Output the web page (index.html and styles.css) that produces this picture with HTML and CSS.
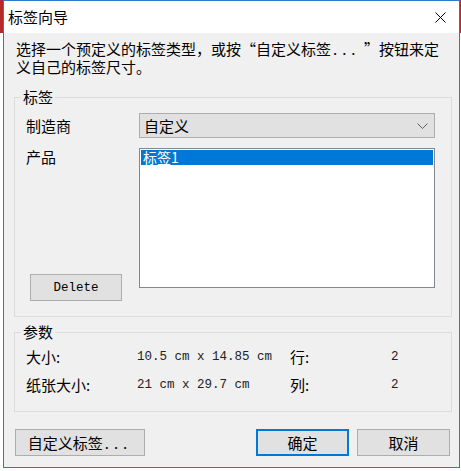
FILE: index.html
```html
<!DOCTYPE html>
<html lang="zh-CN">
<head>
    <meta charset="UTF-8">
    <meta name="viewport" content="width=device-width, initial-scale=1.0">
    <title>标签向导</title>
    <link rel="stylesheet" href="styles.css">
</head>
<body>
<div class="desktop">
    <div class="window">
        <!-- Title bar -->
        <div class="titlebar">
            <span class="title">标签向导</span>
            <svg class="close" width="11" height="11" viewBox="0 0 11 11">
                <path d="M0.5 0.5 L10.5 10.5 M10.5 0.5 L0.5 10.5" stroke="#000" stroke-width="1" fill="none"/>
            </svg>
        </div>

        <div class="content">
            <p class="intro">选择一个预定义的标签类型，或按“自定义标签<span class="dots">...</span> ”按钮来定<br>义自己的标签尺寸。</p>

            <!-- Label group -->
            <fieldset class="group label-group">
                <legend>标签</legend>
                <div class="field-row">
                    <span class="field-label">制造商</span>
                    <div class="combo">
                        <span>自定义</span>
                        <svg class="chevron" width="11" height="6" viewBox="0 0 11 6">
                            <polyline points="0.5,0.5 5.5,5.5 10.5,0.5" stroke="#606060" stroke-width="1" fill="none"/>
                        </svg>
                    </div>
                </div>
                <div class="field-row product-row">
                    <div class="product-side">
                        <span class="field-label">产品</span>
                        <button class="btn btn-delete">Delete</button>
                    </div>
                    <ul class="listbox">
                        <li class="selected">标签1</li>
                    </ul>
                </div>
            </fieldset>

            <!-- Parameters group -->
            <fieldset class="group params">
                <legend>参数</legend>
                <div class="params-grid">
                    <span>大小:</span>
                    <span class="mono">10.5 cm x 14.85 cm</span>
                    <span>行:</span>
                    <span class="mono">2</span>
                    <span>纸张大小:</span>
                    <span class="mono">21 cm x 29.7 cm</span>
                    <span>列:</span>
                    <span class="mono">2</span>
                </div>
            </fieldset>

            <!-- Dialog buttons -->
            <div class="actions">
                <button class="btn btn-custom">自定义标签<span class="dots">...</span></button>
                <button class="btn btn-ok">确定</button>
                <button class="btn btn-cancel">取消</button>
            </div>
        </div>
    </div>
</div>
</body>
</html>
```

FILE: styles.css
```css
body {
    margin: 0;
    padding: 0;
    background-color: #fff;
    font-family: "Noto Sans CJK SC", sans-serif;
    color: #000;
}
.desktop {
    width: 461px;
    height: 471px;
    background: linear-gradient(to bottom, #b5282c 0, #b5282c 33px, #fff 33px);
}
.window {
    margin-left: 3px;
    width: 455px;
    border: 1px solid #2b79d0;
    background-color: #f0f0f0;
}
.titlebar {
    height: 32px;
    background-color: #fff;
    display: flex;
    align-items: center;
    justify-content: space-between;
    padding: 0 13px 0 4px;
}
.title {
    font-size: 15px;
    line-height: 18px;
}
.close {
    display: block;
}
.content {
    height: 434px;
    box-sizing: border-box;
    padding-top: 7px;
    font-size: 15px;
    line-height: 18px;
}
.intro {
    margin: 0 0 12px 12px;
}
.dots {
    letter-spacing: 5px;
    padding-left: 2px;
}
.group {
    margin: 0 7px 0 10px;
    border: 1px solid #dcdcdc;
    min-width: 0;
}
.group legend {
    padding: 0 2px;
    margin-left: -5px;
    font-size: 15px;
    line-height: 18px;
}
.label-group {
    padding: 7px 14px 15px 11px;
}
.field-row {
    display: flex;
    align-items: center;
}
.field-label {
    width: 113px;
    flex-shrink: 0;
}
.combo {
    width: 296px;
    height: 25px;
    box-sizing: border-box;
    background-color: #e1e1e1;
    border: 1px solid #adadad;
    display: flex;
    align-items: center;
    justify-content: space-between;
    padding: 0 6px 0 4px;
}
.chevron {
    display: block;
}
.product-row {
    margin-top: 10px;
    align-items: flex-start;
}
.product-side {
    width: 113px;
    display: flex;
    flex-direction: column;
    align-items: flex-start;
}
.btn {
    height: 27px;
    box-sizing: border-box;
    background-color: #e1e1e1;
    border: 1px solid #adadad;
    padding: 0;
    margin: 0;
    font-family: "Noto Sans CJK SC", sans-serif;
    font-size: 15px;
    line-height: 18px;
    color: #000;
}
.btn-delete {
    margin-top: 108px;
    margin-left: 4px;
    width: 92px;
    font-family: "Liberation Mono", monospace;
    font-size: 12.5px;
}
.listbox {
    width: 296px;
    height: 140px;
    box-sizing: border-box;
    margin: 0;
    padding: 1px;
    list-style: none;
    background-color: #fff;
    border: 1px solid #828790;
}
.listbox .selected {
    height: 15px;
    line-height: 15px;
    font-size: 14px;
    padding-left: 2px;
    background-color: #0078d7;
    color: #fff;
}
.params {
    margin-top: 6px;
    padding: 7px 7px 7px 11px;
}
.params-grid {
    display: grid;
    grid-template-columns: 111px 153px 101px auto;
    grid-auto-rows: 28px;
}
.mono {
    font-family: "Liberation Mono", monospace;
    font-size: 12.5px;
    color: #222;
}
.actions {
    margin-top: 17px;
    padding: 0 9px 0 11px;
    display: flex;
}
.btn-custom {
    width: 130px;
}
.btn-ok {
    width: 93px;
    margin-left: auto;
    border: 2px solid #0078d7;
}
.btn-cancel {
    width: 93px;
    margin-left: 8px;
}
```
